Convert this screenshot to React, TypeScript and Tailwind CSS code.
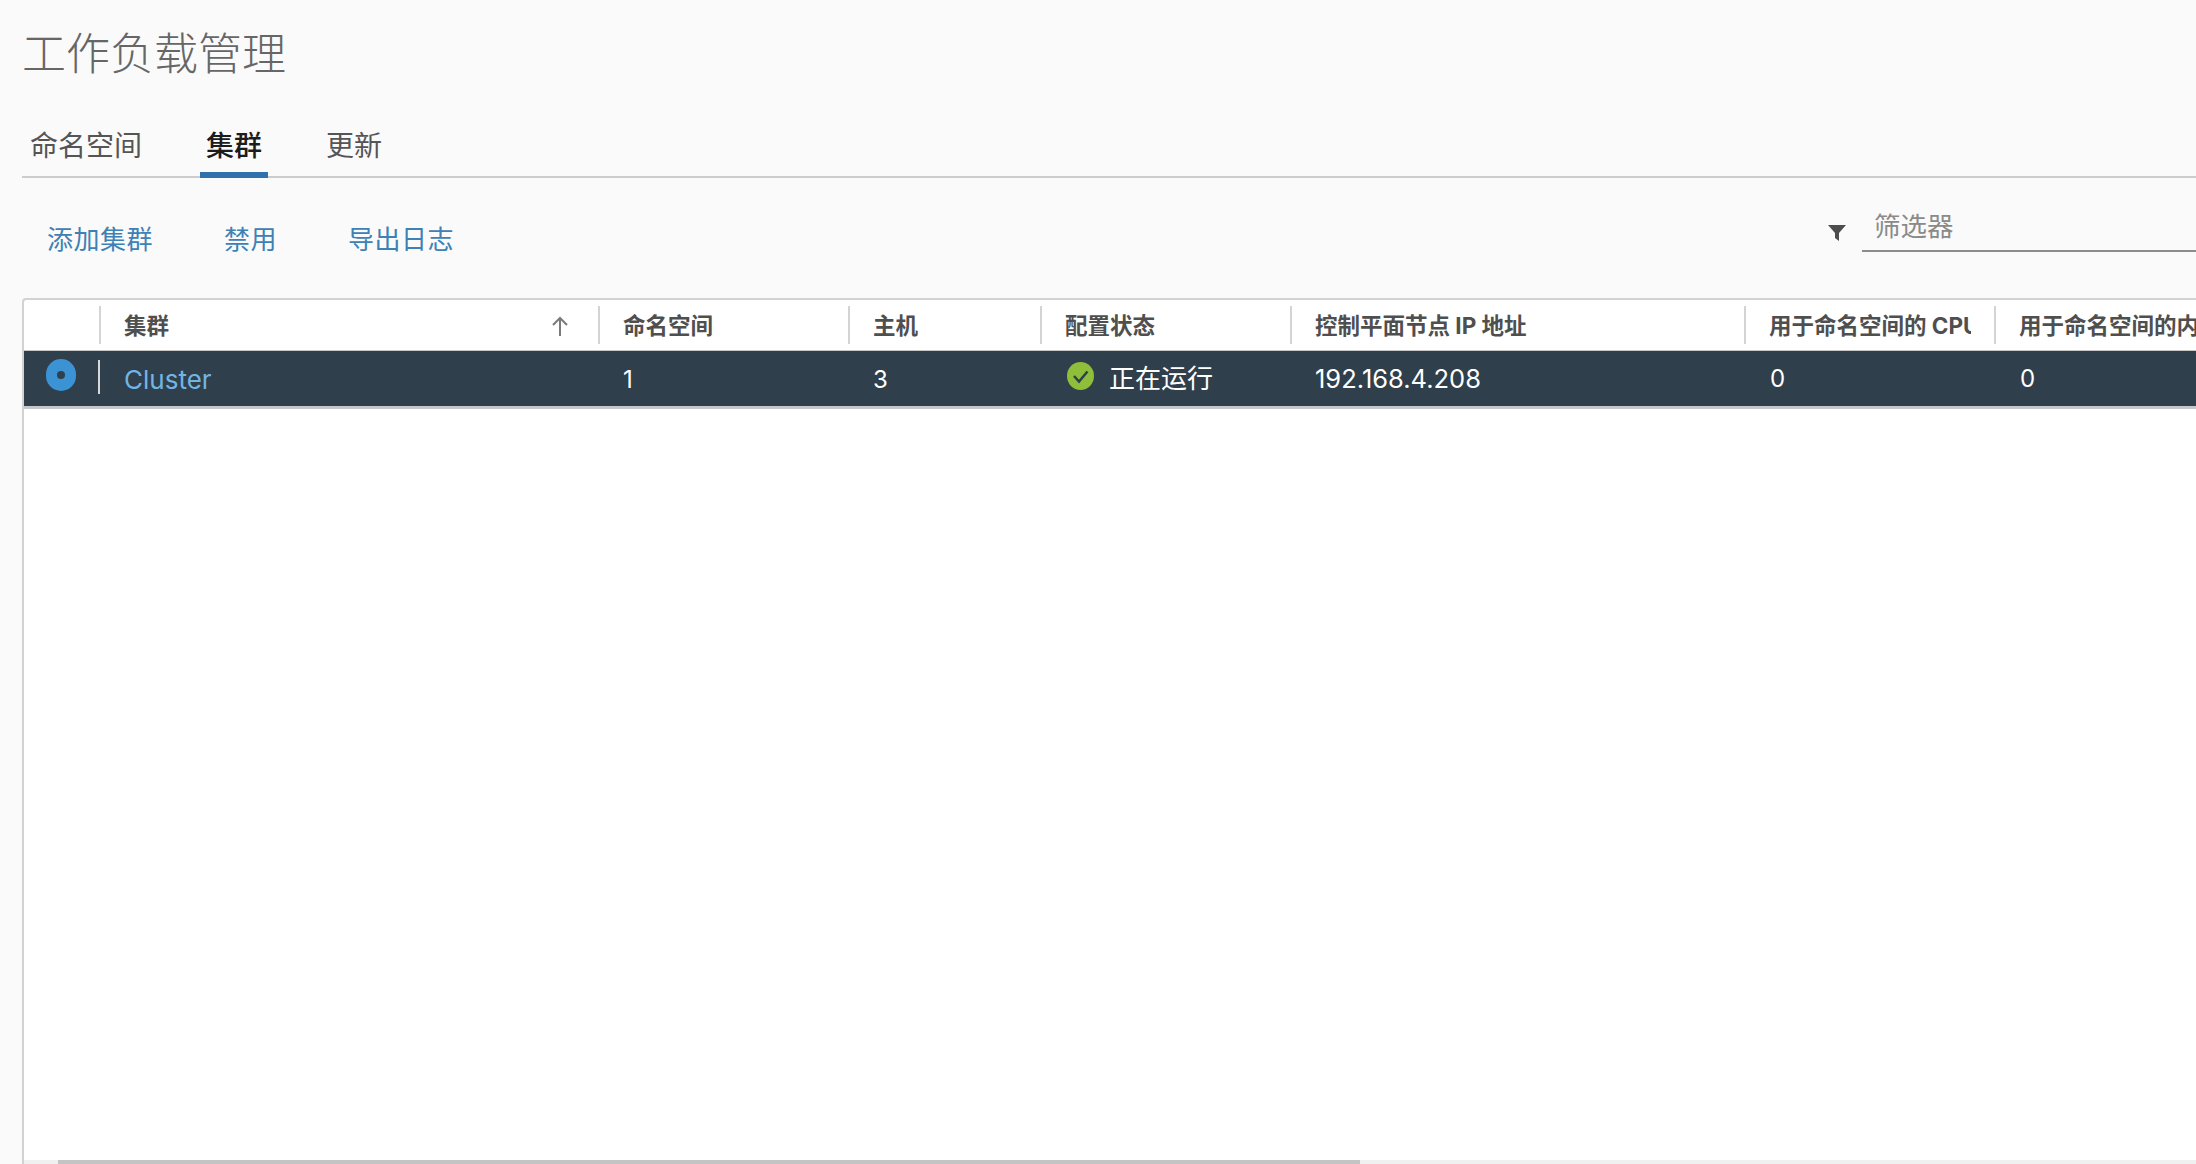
import React from "react";

const cjk = "font-['Inter','Noto_Sans_CJK_SC',sans-serif]";

const cols = [
  { w: "w-[76px]", label: "" },
  { w: "w-[499px]", label: "集群", sort: true },
  { w: "w-[250px]", label: "命名空间" },
  { w: "w-[192px]", label: "主机" },
  { w: "w-[250px]", label: "配置状态" },
  { w: "w-[454px]", label: "控制平面节点 IP 地址" },
  { w: "w-[250px]", label: "用于命名空间的 CPU" },
  { w: "w-[300px]", label: "用于命名空间的内存" },
];

function Head({ w, label, sort, first }: { w: string; label: string; sort?: boolean; first?: boolean }) {
  return (
    <div className={`${w} shrink-0 h-full flex items-center relative`}>
      {!first && (
        <>
          <div className="w-[2px] h-[38px] bg-[#d4d4d4] shrink-0 -ml-px" />
          <div className="ml-[23px] mr-[24px] mt-[2px] flex-1 min-w-0 overflow-hidden whitespace-nowrap text-[22.5px] font-bold text-[#4f4f4f]">
            {label}
          </div>
        </>
      )}
      {sort && (
        <svg className="absolute right-[29px] top-[15px]" width="20" height="22" viewBox="0 0 20 22" fill="none" stroke="#7a7a7a" strokeWidth="2">
          <path d="M10 21V3M3 10l7-7 7 7" />
        </svg>
      )}
    </div>
  );
}

export default function App() {
  return (
    <div className={`${cjk} w-[2196px] h-[1164px] overflow-hidden bg-[#fafafa] pl-[22px] flex flex-col`}>
      <h1 className="h-[108px] pt-[24px] text-[44px] leading-[60px] font-light text-[#666666]">工作负载管理</h1>

      <div className="h-[70px] border-b-2 border-[#cccccc] flex items-end text-[28px] text-[#555555]">
        <div className="w-[178px] h-[68px] pl-[8px] pt-[20px] leading-[36px]">命名空间</div>
        <div className="w-[68px] h-[70px] -mb-[2px] border-b-[6px] border-[#2f70ad] text-center pt-[20px] leading-[36px] font-medium text-[#1c1c1c]">集群</div>
        <div className="ml-[58px] h-[68px] pt-[20px] leading-[36px]">更新</div>
      </div>

      <div className="h-[120px] flex items-start text-[26px] text-[#3d81b5] tracking-[0.5px]">
        <div className="ml-[25px] mt-[44px] leading-[36px]">添加集群</div>
        <div className="ml-[71px] mt-[44px] leading-[36px]">禁用</div>
        <div className="ml-[71px] mt-[44px] leading-[36px]">导出日志</div>
        <div className="ml-auto flex items-start tracking-normal">
          <svg className="mt-[46px] mr-[15px]" width="20" height="18" viewBox="0 0 20 18" fill="#4d4d4d">
            <path d="M1 1h18l-7 8v8l-4-3V9z" />
          </svg>
          <div className="w-[334px] h-[74px] border-b-2 border-[#8c8c8c] pl-[12px] pt-[30px] leading-[36px] text-[26.5px] text-[#8a8a8a]">筛选器</div>
        </div>
      </div>

      <div className="flex-1 min-h-0 w-[2300px] bg-white border-t-2 border-l-2 border-[#d2d2d2] rounded-tl-[4px] flex flex-col relative">
        <div className="h-[51px] flex border-b border-[#c9c9c9]">
          {cols.map((c, i) => (
            <Head key={i} w={c.w} label={c.label} sort={c.sort} first={i === 0} />
          ))}
        </div>

        <div className="h-[55px] bg-[#2f3f4c] flex items-center text-white border-b-[3px] border-[#c4c8cb] box-content -mb-[3px]">
          <div className="w-[76px] shrink-0 flex items-center relative h-full">
            <div className="ml-[22px] -mt-[8px] w-[30px] h-[32px] rounded-full bg-[#3b93d3] flex items-center justify-center">
              <div className="w-[8px] h-[8px] rounded-full bg-[#2f3f4c]" />
            </div>
            <div className="absolute right-0 top-[9px] w-[2px] h-[34px] bg-[#d6d8da]" />
          </div>
          <div className="w-[499px] shrink-0 pl-[24px] pt-[1px] text-[26px] text-[#74b4e3]">Cluster</div>
          <div className="w-[250px] shrink-0 pl-[24px] pt-[2px] text-[24px]">1</div>
          <div className="w-[192px] shrink-0 pl-[24px] pt-[2px] text-[24px]">3</div>
          <div className="w-[250px] shrink-0 pl-[26px] flex items-center">
            <svg className="-mt-[6px]" width="27" height="28" viewBox="0 0 27 28">
              <ellipse cx="13.5" cy="14" rx="13.5" ry="14" fill="#8fbf3a" />
              <path d="M7 14l5 5.5 8.5-10" fill="none" stroke="#2f3f4c" strokeWidth="2.5" />
            </svg>
            <span className="ml-[15px] text-[26px] leading-none">正在运行</span>
          </div>
          <div className="w-[454px] shrink-0 pl-[24px] pt-[2px] text-[25.5px]">192.168.4.208</div>
          <div className="w-[250px] shrink-0 pl-[25px] pt-[1px] text-[24px]">0</div>
          <div className="w-[300px] shrink-0 pl-[25px] pt-[1px] text-[24px]">0</div>
        </div>

        <div className="flex-1" />

        <div className="h-[4px] bg-[#f0f0f0] pl-[34px]">
          <div className="w-[1302px] h-full bg-[#c4c4c4]" />
        </div>
      </div>
    </div>
  );
}
